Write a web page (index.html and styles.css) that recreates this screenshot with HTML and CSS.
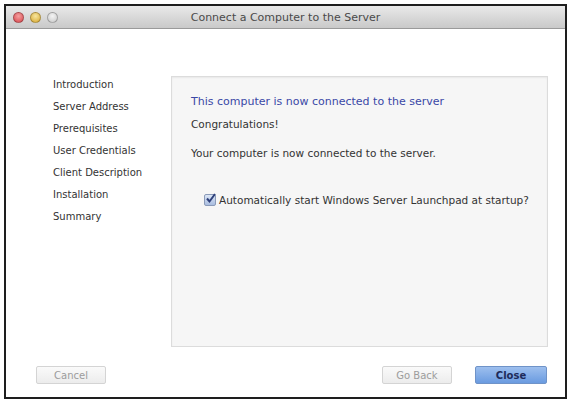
FILE: index.html
```html
<!DOCTYPE html>
<html lang="en">
<head>
    <meta charset="UTF-8">
    <title>Connect a Computer to the Server</title>
    <link rel="stylesheet" href="styles.css">
</head>
<body>

    <div class="window">
        <!-- Title bar -->
        <div class="titlebar">
            <div class="lights">
                <span class="light red"></span>
                <span class="light yellow"></span>
                <span class="light gray"></span>
            </div>
            <div class="title">Connect a Computer to the Server</div>
        </div>

        <!-- Wizard body -->
        <div class="wizard">
            <ul class="steps">
                <li>Introduction</li>
                <li>Server Address</li>
                <li>Prerequisites</li>
                <li>User Credentials</li>
                <li>Client Description</li>
                <li>Installation</li>
                <li>Summary</li>
            </ul>

            <section class="panel">
                <h2>This computer is now connected to the server</h2>
                <p class="congrats">Congratulations!</p>
                <p class="info">Your computer is now connected to the server.</p>
                <label class="option">
                    <span class="check">
                        <svg width="11" height="11" viewBox="0 0 11 11">
                            <path d="M2 5.5 L4.5 8.5 L10 1" fill="none" stroke="#2d3f7a" stroke-width="2"/>
                        </svg>
                    </span>
                    Automatically start Windows Server Launchpad at startup?
                </label>
            </section>
        </div>

        <!-- Buttons -->
        <div class="footer">
            <button class="btn" disabled>Cancel</button>
            <div class="right-btns">
                <button class="btn" disabled>Go Back</button>
                <button class="btn primary">Close</button>
            </div>
        </div>
    </div>

</body>
</html>
```

FILE: styles.css
```css
/* Page */
body {
    margin: 0;
    background-color: #fff;
    font-family: 'DejaVu Sans', sans-serif;
    color: #333;
}

/* Window frame */
.window {
    margin: 4px 0 0 4px;
    width: 559px;
    height: 391px;
    border: 2px solid #1e1e1e;
    background-color: #fff;
    display: flex;
    flex-direction: column;
}

/* Title bar */
.titlebar {
    height: 22px;
    background: linear-gradient(#e9e9e9, #c9c9c9);
    border-bottom: 1px solid #9a9a9a;
    display: flex;
    align-items: center;
    position: relative;
}

.lights {
    display: flex;
    gap: 6px;
    padding-left: 7px;
}

.light {
    width: 9px;
    height: 9px;
    border-radius: 50%;
    border: 1px solid rgba(0, 0, 0, 0.25);
}

.light.red {
    background: radial-gradient(circle at 50% 35%, #f4a0a0, #d9464c);
}

.light.yellow {
    background: radial-gradient(circle at 50% 35%, #f6e6a0, #d9a830);
}

.light.gray {
    background: radial-gradient(circle at 50% 35%, #f4f4f4, #c8c8c8);
}

.title {
    position: absolute;
    left: 0;
    right: 0;
    text-align: center;
    font-size: 11px;
    color: #4a4a4a;
    pointer-events: none;
}

/* Wizard area */
.wizard {
    display: flex;
    padding: 45px 17px 0 47px;
}

.steps {
    list-style: none;
    margin: 0;
    padding: 0;
    width: 118px;
    font-size: 10px;
    color: #333;
}

.steps li {
    height: 22px;
    line-height: 22px;
    white-space: nowrap;
}

.panel {
    margin-top: 2px;
    width: 375px;
    height: 269px;
    background-color: #f6f6f6;
    border: 1px solid #dcdcdc;
    box-shadow: inset 0 1px 2px rgba(0, 0, 0, 0.06);
    padding: 17px 0 0 19px;
    box-sizing: content-box;
}

.panel {
    width: 356px;
    height: 252px;
}

.panel h2 {
    margin: 0;
    font-size: 11px;
    font-weight: normal;
    line-height: 16px;
    color: #3a48a6;
}

.panel p {
    margin: 0;
    font-size: 10.5px;
    line-height: 16px;
    color: #333;
}

.congrats {
    padding-top: 6px;
}

.info {
    padding-top: 13px;
}

.option {
    display: flex;
    align-items: center;
    gap: 3px;
    margin-top: 31px;
    padding-left: 13px;
    font-size: 10.5px;
    line-height: 16px;
    color: #333;
}

.check {
    width: 10px;
    height: 10px;
    border: 1px solid #8a9ab8;
    border-radius: 2px;
    background: linear-gradient(#dce6f6, #a9bde0);
    position: relative;
}

.check svg {
    position: absolute;
    left: 0;
    top: -2px;
}

/* Footer buttons */
.footer {
    display: flex;
    justify-content: space-between;
    margin-top: 19px;
    padding: 0 18px 0 30px;
}

.right-btns {
    display: flex;
    gap: 23px;
}

.btn {
    width: 70px;
    height: 18px;
    padding: 0;
    font-family: 'DejaVu Sans', sans-serif;
    font-size: 10px;
    color: #9c9c9c;
    background: linear-gradient(#fafafa, #ececec);
    border: 1px solid #d4d4d4;
    border-radius: 2px;
}

.btn.primary {
    width: 72px;
    color: #1d2b5a;
    font-weight: bold;
    background: linear-gradient(#9dbfee, #6a9be0);
    border-color: #6f93c8;
}
```
